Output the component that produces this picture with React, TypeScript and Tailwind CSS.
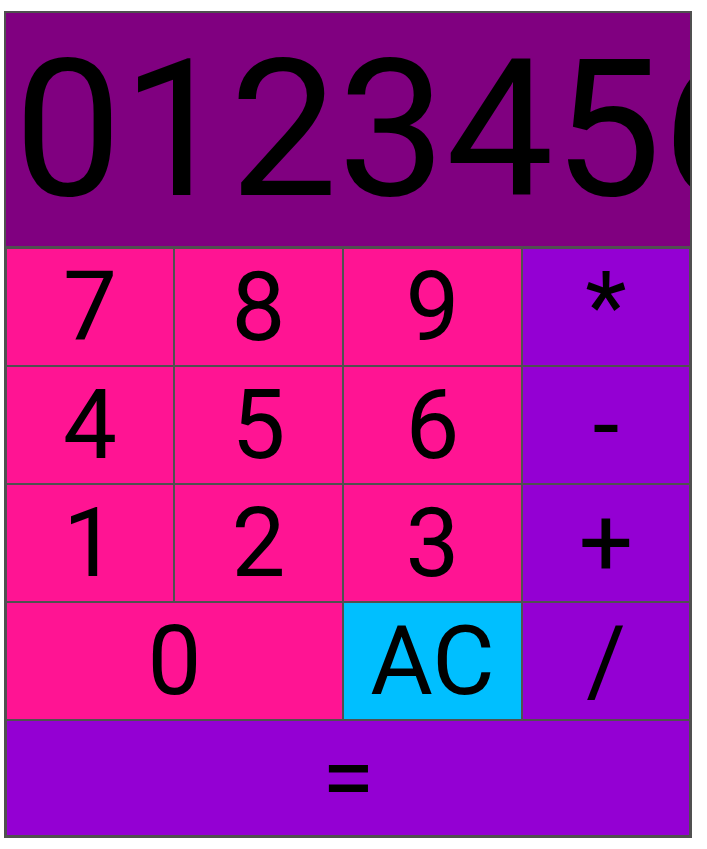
import React from 'react';

const keys = [
  { label: '7', color: 'bg-[#ff1493]' },
  { label: '8', color: 'bg-[#ff1493]' },
  { label: '9', color: 'bg-[#ff1493]' },
  { label: '*', color: 'bg-[#9400d3]' },
  { label: '4', color: 'bg-[#ff1493]' },
  { label: '5', color: 'bg-[#ff1493]' },
  { label: '6', color: 'bg-[#ff1493]' },
  { label: '-', color: 'bg-[#9400d3]' },
  { label: '1', color: 'bg-[#ff1493]' },
  { label: '2', color: 'bg-[#ff1493]' },
  { label: '3', color: 'bg-[#ff1493]' },
  { label: '+', color: 'bg-[#9400d3]' },
  { label: '0', color: 'bg-[#ff1493]', span: 'col-span-2' },
  { label: 'AC', color: 'bg-[#00bfff]' },
  { label: '/', color: 'bg-[#9400d3]' },
  { label: '=', color: 'bg-[#9400d3]', span: 'col-span-4' },
];

export default function App() {
  return (
    <div className="min-h-screen bg-white pt-[11px] pl-[4px] font-['Roboto',sans-serif]">
      <div className="w-[688px] border-2 border-[#505050]">
        <div className="h-[235px] bg-[#800080] border-b-2 border-[#505050] flex items-center overflow-hidden whitespace-nowrap pl-[8px]">
          <span className="text-[192px] leading-none text-black">0123456789</span>
        </div>
        <div className="grid grid-cols-[168px_169px_179px_168px] grid-rows-[118px_118px_118px_118px_116px]">
          {keys.map((k) => (
            <button
              key={k.label}
              className={`${k.color} ${k.span ?? ''} border border-[#505050] flex items-center justify-center text-8xl leading-none text-black`}
            >
              {k.label}
            </button>
          ))}
        </div>
      </div>
    </div>
  );
}
